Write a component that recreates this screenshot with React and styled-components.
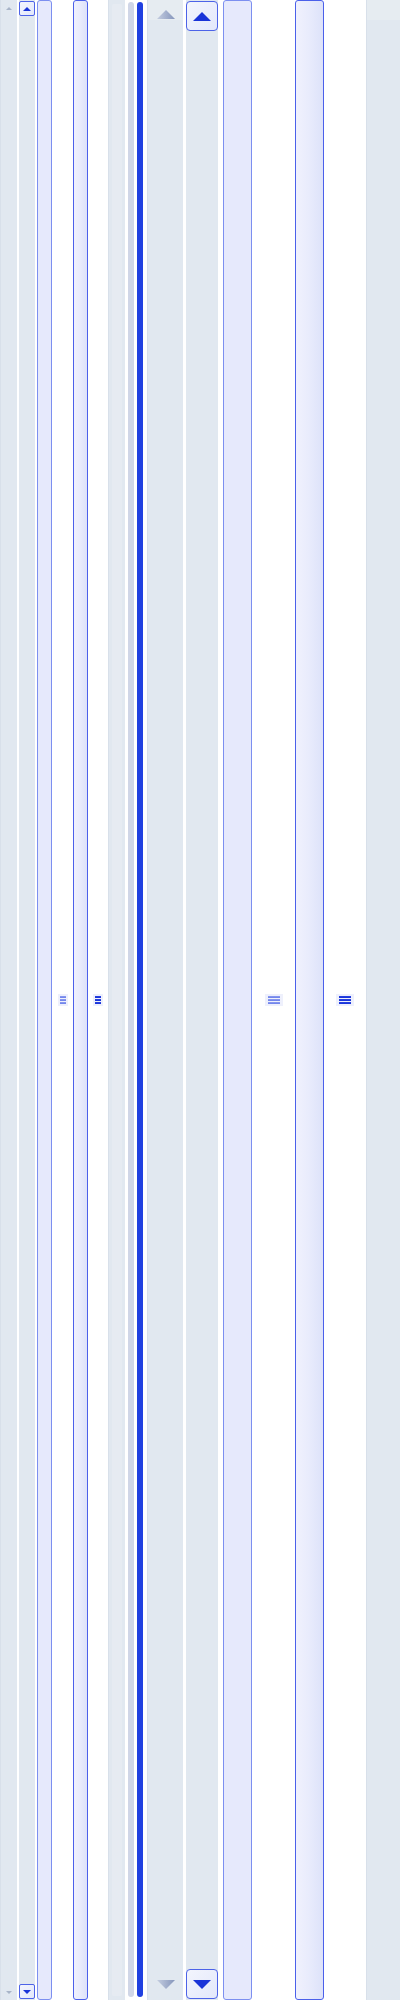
import React from 'react';
import styled, { createGlobalStyle } from 'styled-components';

const GlobalStyle = createGlobalStyle`
  html, body {
    margin: 0;
    padding: 0;
    background: #ffffff;
  }
`;

const Page = styled.div`
  display: flex;
  align-items: stretch;
  width: 400px;
  height: 2000px;
  background: #ffffff;
  overflow: hidden;
`;

const Gap = styled.div`
  flex: 0 0 ${(p) => p.w}px;
  display: flex;
  align-items: center;
  justify-content: center;
`;

// disabled track (grey-blue)
const DisabledBar = styled.div`
  flex: 0 0 ${(p) => p.w}px;
  display: flex;
  flex-direction: column;
  justify-content: space-between;
  align-items: stretch;
  background: #e1e8f0;
  border-left: 1px solid #d8e0ea;
  box-sizing: border-box;
`;

const DisabledCap = styled.div`
  height: ${(p) => p.h}px;
  display: flex;
  align-items: ${(p) => p.align || 'center'};
  justify-content: center;
  box-sizing: border-box;
  padding: ${(p) => p.pad || '0'};
  background: ${(p) => (p.light ? '#e6ecf1' : 'transparent')};
`;

const Triangle = styled.div`
  width: 0;
  height: 0;
  border-left: ${(p) => p.size}px solid transparent;
  border-right: ${(p) => p.size}px solid transparent;
  ${(p) =>
    p.down
      ? `border-top: ${p.h}px solid ${p.color};`
      : `border-bottom: ${p.h}px solid ${p.color};`}
`;

const InnerThumb = styled.div`
  flex: 1;
  margin: 4px 3px;
  background: #e6ebf2;
  border-radius: 2px;
`;

// scrollbar with arrow buttons
const ButtonBar = styled.div`
  flex: 0 0 ${(p) => p.w}px;
  display: flex;
  flex-direction: column;
  justify-content: space-between;
  background: #e1e8f0;
  padding: 1px 0;
  box-sizing: border-box;
`;

const ArrowButton = styled.div`
  height: ${(p) => p.h}px;
  display: flex;
  align-items: center;
  justify-content: center;
  background: linear-gradient(135deg, #f3f5fd, #e3e8fb);
  border: 1px solid #4d63e8;
  border-radius: ${(p) => p.r}px;
  box-sizing: border-box;
`;

// full-length thumb
const Thumb = styled.div`
  flex: 0 0 ${(p) => p.w}px;
  box-sizing: border-box;
  border: 1px solid ${(p) => (p.strong ? '#4b60ea' : '#7c8ff0')};
  border-radius: 3px;
  background: ${(p) =>
    p.strong
      ? 'linear-gradient(90deg, #f0f1fd 0%, #e8ebfc 50%, #dde2f9 100%)'
      : '#e6e9fc'};
`;

const Grip = styled.div`
  display: flex;
  flex-direction: column;
  gap: 1px;
  padding: 2px ${(p) => p.pad}px;
  background: #eef0fc;
`;

const GripLine = styled.div`
  width: ${(p) => p.w}px;
  height: 2px;
  background: ${(p) =>
    p.strong
      ? 'linear-gradient(180deg, #2b45e0, #1530d8)'
      : 'linear-gradient(180deg, #8f9df0, #6a7fea)'};
`;

const ThinBar = styled.div`
  flex: 0 0 ${(p) => p.w}px;
  margin: 2px 0 3px;
  border-radius: 3px;
  background: ${(p) => p.color};
`;

const GripBox = ({ strong, w, pad }) => (
  <Grip pad={pad}>
    <GripLine w={w} strong={strong} />
    <GripLine w={w} strong={strong} />
    <GripLine w={w} strong={strong} />
  </Grip>
);

// shaded arrow for the wide disabled bar
const ShadedArrow = ({ down, id }) => (
  <svg width="18" height="9" viewBox="0 0 18 9">
    <defs>
      <linearGradient id={id} x1="0" y1="0" x2="1" y2="0">
        <stop offset="0" stopColor="#c4cde0" />
        <stop offset="1" stopColor="#8595bb" />
      </linearGradient>
    </defs>
    <polygon
      points={down ? '0,0 18,0 9,9' : '9,0 18,9 0,9'}
      fill={`url(#${id})`}
    />
  </svg>
);

export default function App() {
  return (
    <>
      <GlobalStyle />
      <Page>
        <DisabledBar w={17}>
          <DisabledCap h={16}>
            <Triangle size={3} h={3} color="#a8b4c8" />
          </DisabledCap>
          <DisabledCap h={16}>
            <Triangle down size={3} h={3} color="#a8b4c8" />
          </DisabledCap>
        </DisabledBar>
        <Gap w={2} />
        <ButtonBar w={16}>
          <ArrowButton h={15} r={2}>
            <Triangle size={4} h={4} color="#1a34d8" />
          </ArrowButton>
          <ArrowButton h={15} r={2}>
            <Triangle down size={4} h={4} color="#1a34d8" />
          </ArrowButton>
        </ButtonBar>
        <Gap w={2} />
        <Thumb w={15} />
        <Gap w={21}>
          <GripBox w={6} pad={2} />
        </Gap>
        <Thumb w={15} strong />
        <Gap w={20}>
          <GripBox w={6} pad={2} strong />
        </Gap>
        <DisabledBar w={17}>
          <InnerThumb />
        </DisabledBar>
        <Gap w={3} />
        <ThinBar w={6} color="#d0d6e7" />
        <Gap w={3} />
        <ThinBar w={6} color="#2040e0" />
        <Gap w={4} />
        <DisabledBar w={36}>
          <DisabledCap h={20} light align="flex-end" pad="0 0 1px">
            <ShadedArrow id="arrUp" />
          </DisabledCap>
          <DisabledCap h={20} align="flex-start">
            <ShadedArrow down id="arrDown" />
          </DisabledCap>
        </DisabledBar>
        <Gap w={3} />
        <ButtonBar w={32}>
          <ArrowButton h={30} r={4}>
            <Triangle size={9} h={9} color="#1a34d8" />
          </ArrowButton>
          <ArrowButton h={30} r={4}>
            <Triangle down size={9} h={9} color="#1a34d8" />
          </ArrowButton>
        </ButtonBar>
        <Gap w={5} />
        <Thumb w={29} />
        <Gap w={43}>
          <GripBox w={12} pad={3} />
        </Gap>
        <Thumb w={29} strong />
        <Gap w={42}>
          <GripBox w={12} pad={3} strong />
        </Gap>
        <DisabledBar w={35}>
          <DisabledCap h={20} light />
        </DisabledBar>
      </Page>
    </>
  );
}
